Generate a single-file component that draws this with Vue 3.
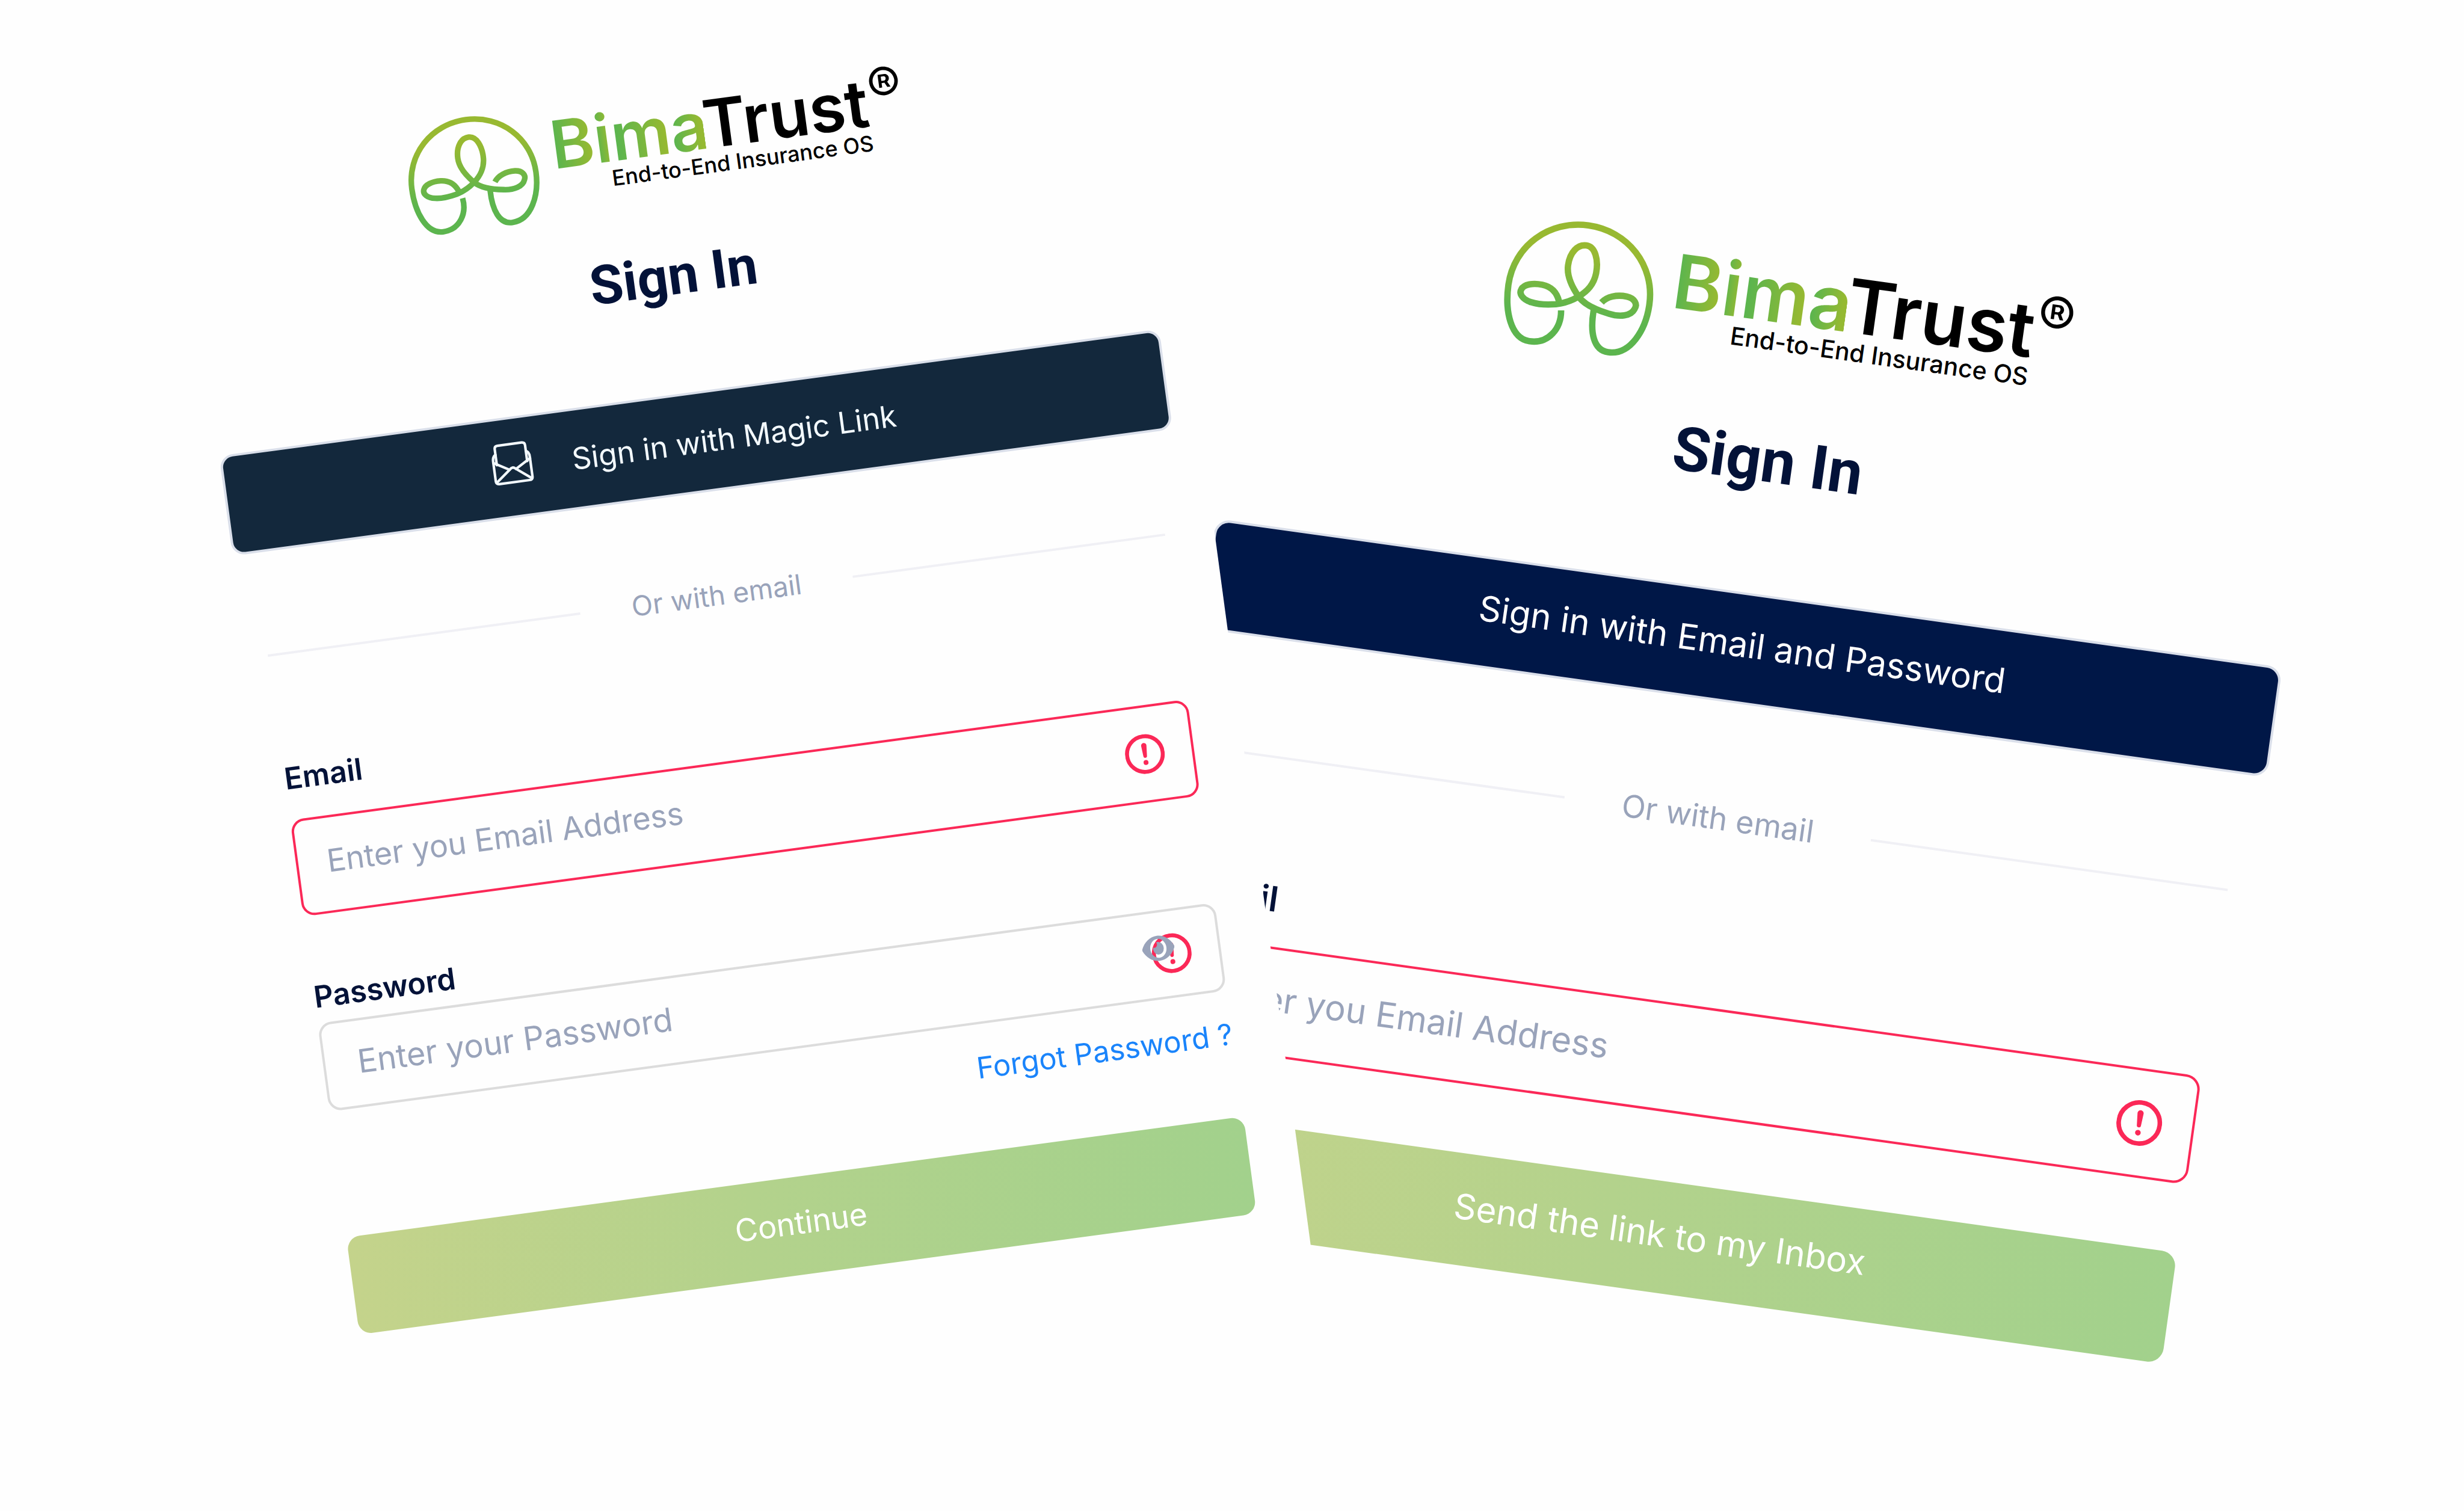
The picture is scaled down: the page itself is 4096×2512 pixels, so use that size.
<script setup>
const brandLetters = ['B', 'i', 'm', 'a']

const cards = [
  {
    id: 'magic',
    provider: 'Sign in with Magic Link',
    envelope: true,
    fields: [
      { name: 'email', label: 'Email', type: 'email', placeholder: 'Enter you Email Address', invalid: true },
      { name: 'password', label: 'Password', type: 'password', placeholder: 'Enter your Password', invalid: false }
    ],
    forgot: true,
    submit: 'Continue'
  },
  {
    id: 'inbox',
    provider: 'Sign in with Email and Password',
    envelope: false,
    fields: [
      { name: 'email', label: 'Email', type: 'email', placeholder: 'Enter you Email Address', invalid: true }
    ],
    forgot: false,
    submit: 'Send the link to my Inbox'
  }
]
</script>

<template>
  <main class="stage">
    <section v-for="card in cards" :key="card.id" class="card" :class="card.id">
      <header class="brand">
        <svg class="mark" viewBox="0 0 224 196" fill="none" aria-hidden="true">
          <defs>
            <linearGradient :id="`leaf-${card.id}`" gradientUnits="userSpaceOnUse" x1="112" y1="0" x2="112" y2="196">
              <stop offset="0.25" stop-color="#98b931" />
              <stop offset="0.72" stop-color="#5cb54e" />
            </linearGradient>
          </defs>
          <g :stroke="`url(#leaf-${card.id})`" stroke-width="9.5" stroke-linejoin="round">
            <path d="M89 138C93 165 77 190 49 190C20 190 6 150 6 111C6 52 53 7 112 7C171 7 218 52 218 111C218 150 200 190 167 190C145 190 136 165 137 131" />
            <path d="M147 118C154 108 168 103 183 104C195 105 201 113 197 121C193 132 177 136 160 133C140 130 122 125 112 114C100 101 90 86 90 70C90 50 100 37 113 37C126 37 134 55 133 76C132 93 124 104 112 114C102 122 92 127 80 130C66 133 53 134 43 132C30 130 23 122 26 115C29 107 42 103 56 104C70 105 79 112 84 125" />
          </g>
        </svg>
        <div class="brand-text">
          <div class="wordmark"><span v-for="letter in brandLetters" :key="letter" class="bima">{{ letter }}</span>Trust</div>
          <div class="tagline">End-to-End Insurance OS</div>
        </div>
        <span class="registered">®</span>
      </header>

      <h1 class="title">Sign In</h1>

      <button type="button" class="provider">
        <svg v-if="card.envelope" class="envelope" viewBox="0 0 64 66" fill="none" stroke="currentColor" stroke-width="4" stroke-linecap="round" stroke-linejoin="round" aria-hidden="true">
          <path d="M8 33V8Q8 3 13 3H51Q56 3 56 8V33" />
          <path d="M8 17Q3 19 3 27V58Q3 63 8 63H56Q61 63 61 58V27Q61 19 56 17" />
          <path d="M3 29L27 43M61 29L37 43M5 60L28 42Q32 38 36 42L59 60" />
        </svg>
        <span>{{ card.provider }}</span>
      </button>

      <div class="divider"><span>Or with email</span></div>

      <form class="form" novalidate @submit.prevent>
        <div v-for="field in card.fields" :key="field.name" class="field" :class="field.name">
          <label :for="`${card.id}-${field.name}`">{{ field.label }}</label>
          <div class="control">
            <input
              :id="`${card.id}-${field.name}`"
              :type="field.type"
              :placeholder="field.placeholder"
              :class="{ invalid: field.invalid }"
            />
            <svg class="alert" viewBox="0 0 70 70" aria-hidden="true">
              <circle cx="35" cy="35" r="31.5" fill="none" stroke="#fb2857" stroke-width="7" />
              <path d="M30.3 20a4.7 4.7 0 0 1 9.4 0L38.2 38.5a3.2 3.2 0 0 1-6.4 0Z" fill="#fb2857" />
              <circle cx="35" cy="50" r="4.3" fill="#fb2857" />
            </svg>
            <button v-if="field.type === 'password'" type="button" class="reveal" aria-label="Show password">
              <svg viewBox="0 0 576 512" preserveAspectRatio="none" fill="currentColor" aria-hidden="true">
                <path d="M572.52 241.4C518.29 135.59 410.93 64 288 64S57.68 135.64 3.48 241.41a32.35 32.35 0 0 0 0 29.19C57.71 376.41 165.07 448 288 448s230.32-71.64 284.52-177.41a32.35 32.35 0 0 0 0-29.19zM288 400a144 144 0 1 1 144-144 143.93 143.93 0 0 1-144 144zm0-240a95.31 95.31 0 0 0-25.31 3.79 47.85 47.85 0 0 1-66.9 66.9A95.78 95.78 0 1 0 288 160z" />
              </svg>
            </button>
          </div>
        </div>
        <a v-if="card.forgot" class="forgot" href="#">Forgot Password ?</a>
        <button type="submit" class="submit">{{ card.submit }}</button>
      </form>
    </section>
  </main>
</template>

<style>
html,
body {
  background: #fefefe;
}
</style>

<style scoped>
.stage {
  position: relative;
  min-height: 100vh;
  overflow: hidden;
  background: #fefefe;
  font-family: Inter, "Liberation Sans", sans-serif;
  color: #031238;
}

.stage *,
.stage *::before,
.stage *::after {
  box-sizing: border-box;
}

/* The two sheets lie tilted on the canvas, the first on top of the second. */
.card {
  position: absolute;
  display: flex;
  flex-direction: column;
  transform-origin: 0 0;
}

.magic {
  z-index: 2;
  left: 5.95%;
  top: 211px;
  width: 40.75%;
  padding: 52px 46px 80px;
  background: #fefefe;
  transform: rotate(-7.68deg);

  --text: 50px;
  --prompt: 52px;
  --line: 60px;
  --inset: 36px;
  --radius: 22px;
  --mark-width: 220px;
  --word: 110px;
  --word-line: 96px;
  --tag: 36px;
  --tag-line: 40px;
  --title: 90px;
  --alert: 66px;
  --alert-right: 49px;
}

.inbox {
  z-index: 1;
  left: 50.25%;
  top: 231px;
  width: 46.2%;
  padding: 54px 51px 80px;
  transform: rotate(7.95deg);

  --text: 58px;
  --prompt: 58px;
  --line: 68px;
  --inset: 39px;
  --radius: 25px;
  --mark-width: 250px;
  --word: 125px;
  --word-line: 110px;
  --tag: 41px;
  --tag-line: 45px;
  --title: 102px;
  --alert: 76px;
  --alert-right: 54px;
}

.brand {
  display: flex;
  justify-content: center;
  align-items: flex-start;
}

.mark {
  display: block;
  width: var(--mark-width);
  margin-right: 24px;
}

.brand-text {
  padding-top: 20px;
  color: #000;
}

.wordmark {
  font-size: var(--word);
  line-height: var(--word-line);
  font-weight: 600;
  white-space: nowrap;
}

.bima {
  background: linear-gradient(90deg, #5cb54e 10%, #95b932 90%);
  background-clip: text;
  -webkit-background-clip: text;
  color: transparent;
}

.tagline {
  font-size: var(--tag);
  line-height: var(--tag-line);
  font-weight: 500;
  text-align: right;
  white-space: nowrap;
}

.registered {
  margin-left: 2px;
  font-size: 84px;
  line-height: 88px;
  font-weight: 400;
  color: #000;
}

.title {
  margin: 68px 0 0;
  font-family: Roboto, "Liberation Sans", sans-serif;
  font-size: var(--title);
  line-height: 100px;
  font-weight: 700;
  text-align: center;
}

.provider {
  display: flex;
  justify-content: center;
  align-items: center;
  gap: 66px;
  height: 168px;
  margin-top: 145px;
  padding: 0 6px 0 0;
  border: 4px solid #dadfea;
  border-radius: var(--radius);
  background: #13283c;
  color: #f3faff;
  font: inherit;
  font-size: var(--text);
}

.envelope {
  width: 68px;
  height: 70px;
  margin-bottom: 14px;
}

.divider {
  display: flex;
  align-items: center;
  gap: 86px;
  margin: 142px var(--inset) 0;
  font-size: 46px;
  line-height: var(--line);
  color: #99a3ba;
}

.divider::before,
.divider::after {
  content: "";
  flex: 1;
  height: 4px;
  background: #f0f0f5;
}

.form {
  display: flex;
  flex-direction: column;
  margin: 147px var(--inset) 0;
}

.field {
  display: flex;
  flex-direction: column;
}

.field label {
  font-size: var(--text);
  line-height: var(--line);
  font-weight: 600;
}

.control {
  position: relative;
  margin-top: 39px;
}

.control input {
  display: block;
  width: 100%;
  height: 162px;
  padding: 0 160px 10px 48px;
  border: 4px solid #dcdcdc;
  border-radius: var(--radius);
  background: transparent;
  color: inherit;
  font: inherit;
  font-size: var(--prompt);
}

.control input.invalid {
  border-color: #fb2857;
}

.control input::placeholder {
  color: #99a3ba;
  opacity: 1;
}

.alert {
  position: absolute;
  top: 50%;
  right: var(--alert-right);
  width: var(--alert);
  height: var(--alert);
  transform: translateY(-50%);
}

.password {
  margin-top: 105px;
}

.password .control {
  margin-top: 14px;
}

.password .control input {
  height: 148px;
  padding-left: 54px;
  padding-bottom: 4px;
  font-size: 54px;
}

.reveal {
  position: absolute;
  top: 35px;
  right: 76px;
  width: 54px;
  height: 56px;
  padding: 0;
  border: 0;
  background: none;
  color: #99a3ba;
}

.reveal svg {
  display: block;
  width: 54px;
  height: 56px;
}

.forgot {
  align-self: flex-end;
  margin-top: 43px;
  font-size: 49px;
  line-height: 60px;
  color: #1a84fb;
  text-decoration: none;
}

.submit {
  height: 163px;
  margin-top: 108px;
  padding: 0 0 10px;
  border: 0;
  border-radius: var(--radius);
  background: linear-gradient(90deg, #c4d38b, #b3d28c 45%, #a2d18c);
  color: #fff;
  font: inherit;
  font-size: var(--prompt);
}

.inbox .brand-text {
  padding-top: 24px;
}

.inbox .mark {
  margin-right: 28px;
}

.inbox .registered {
  font-size: 94px;
  line-height: 104px;
}

.inbox .title {
  margin-top: 78px;
  line-height: 114px;
}

.inbox .provider {
  height: 185px;
  margin-top: 165px;
  padding: 0 0 12px;
  background: #001747;
  color: #fff;
}

.inbox .divider {
  gap: 96px;
  margin-top: 160px;
  font-size: 52px;
}

.inbox .form {
  margin-top: 166px;
}

.inbox .control {
  margin-top: 45px;
}

.inbox .control input {
  height: 182px;
  padding-left: 58px;
}

.inbox .submit {
  height: 186px;
  margin-top: 114px;
}
</style>
